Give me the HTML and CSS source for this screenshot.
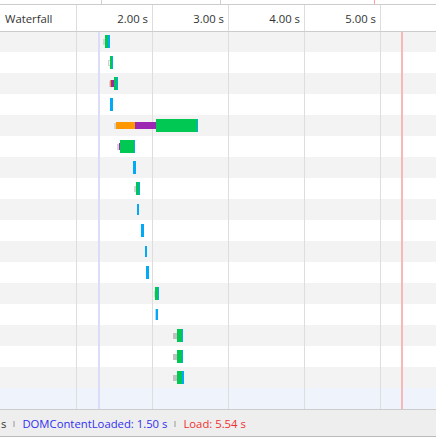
FILE: index.html
```html
<!DOCTYPE html>
<html>
<head>
<meta charset="utf-8">
<link rel="stylesheet" href="styles.css">
</head>
<body>
<div class="panel">
  <div class="overview"></div>
  <div class="header">
    <div class="hcell title">Waterfall</div>
    <div class="hcell tick">2.00 s</div>
    <div class="hcell tick">3.00 s</div>
    <div class="hcell tick">4.00 s</div>
    <div class="hcell tick">5.00 s</div>
    <div class="hcell"></div>
  </div>
  <div class="rows">
    <div class="row"><span class="off" style="width:103px"></span><span class="seg wait" style="width:2px"></span><span class="seg recv" style="width:3px"></span><span class="seg dl" style="width:1.5px"></span></div>
    <div class="row"><span class="off" style="width:108px"></span><span class="seg wait hollow" style="width:1.7px"></span><span class="seg recv" style="width:2px"></span><span class="seg dl" style="width:1.3px"></span></div>
    <div class="row"><span class="off" style="width:109px"></span><span class="seg wait" style="width:1px"></span><span class="seg dns" style="width:1.3px"></span><span class="seg ssl" style="width:2.7px"></span><span class="seg recv" style="width:2.7px"></span><span class="seg dl" style="width:1.3px"></span></div>
    <div class="row"><span class="off" style="width:110px"></span><span class="seg dl" style="width:3px"></span></div>
    <div class="row"><span class="off" style="width:114px"></span><span class="seg wait" style="width:2px"></span><span class="seg dns" style="width:19px"></span><span class="seg ssl" style="width:21px"></span><span class="seg recv" style="width:41px"></span><span class="seg dl" style="width:1px"></span></div>
    <div class="row"><span class="off" style="width:117px"></span><span class="seg wait" style="width:1.7px"></span><span class="seg ssl" style="width:1.3px"></span><span class="seg recv" style="width:13.7px"></span><span class="seg dl" style="width:1px"></span></div>
    <div class="row"><span class="off" style="width:133px"></span><span class="seg dl" style="width:3px"></span></div>
    <div class="row"><span class="off" style="width:134px"></span><span class="seg wait" style="width:2px"></span><span class="seg recv" style="width:3px"></span><span class="seg dl" style="width:1px"></span></div>
    <div class="row"><span class="off" style="width:137px"></span><span class="seg dl thin" style="width:2px"></span></div>
    <div class="row"><span class="off" style="width:141px"></span><span class="seg dl" style="width:3px"></span></div>
    <div class="row"><span class="off" style="width:145px"></span><span class="seg dl thin" style="width:2px"></span></div>
    <div class="row"><span class="off" style="width:146px"></span><span class="seg dl" style="width:3px"></span></div>
    <div class="row"><span class="off" style="width:154px"></span><span class="seg wait" style="width:1px"></span><span class="seg recv" style="width:3px"></span><span class="seg dl" style="width:1px"></span></div>
    <div class="row"><span class="off" style="width:155px"></span><span class="seg pale thin" style="width:1px"></span><span class="seg dl thin" style="width:2px"></span></div>
    <div class="row"><span class="off" style="width:173px"></span><span class="seg wait dark" style="width:4px"></span><span class="seg recv" style="width:5px"></span><span class="seg dl" style="width:1px"></span></div>
    <div class="row"><span class="off" style="width:173px"></span><span class="seg wait dark" style="width:4px"></span><span class="seg recv" style="width:5px"></span><span class="seg dl" style="width:1px"></span></div>
    <div class="row"><span class="off" style="width:173px"></span><span class="seg wait dark" style="width:4px"></span><span class="seg recv" style="width:5px"></span><span class="seg dl" style="width:2px"></span></div>
    <div class="row filler"></div>
  </div>
  <div class="status">
    <span class="stat">s</span>
    <span class="sep"></span>
    <span class="stat dcl">DOMContentLoaded: 1.50 s</span>
    <span class="sep"></span>
    <span class="stat load">Load: 5.54 s</span>
  </div>
</div>
</body>
</html>
```
FILE: styles.css
```css
html, body {
  margin: 0;
  padding: 0;
  background: #ffffff;
}
body {
  width: 436px;
  height: 440px;
  overflow: hidden;
  font-family: "Open Sans", "Noto Sans", sans-serif;
  font-size: 11.3px;
  color: #333333;
}
.panel {
  display: flex;
  flex-direction: column;
  width: 436px;
}
.overview {
  height: 4px;
  border-bottom: 1px solid #cccccc;
  background:
    linear-gradient(to right,
      transparent 101px, #d0d0d0 101px 102px,
      transparent 102px 220px, #d0d0d0 220px 221px,
      transparent 221px 374px, #f6a0a0 374px 375px,
      transparent 375px);
}
.header {
  position: relative;
  z-index: 1;
  display: grid;
  grid-template-columns: 76px 76px 76px 76px 76px 1fr;
  height: 26px;
  border-bottom: 1px solid #cccccc;
  background-color: #ffffff;
  background-image:
    linear-gradient(to right,
      transparent 76px, #dddddd 76px 77px,
      transparent 77px 152px, #dddddd 152px 153px,
      transparent 153px 228px, #dddddd 228px 229px,
      transparent 229px 304px, #dddddd 304px 305px,
      transparent 305px 380px, #dddddd 380px 381px,
      transparent 381px);
}
.hcell {
  display: flex;
  align-items: center;
  white-space: nowrap;
  overflow: hidden;
}
.title {
  padding-left: 5px;
}
.tick {
  justify-content: flex-end;
  padding-right: 4px;
}
.rows {
  display: flex;
  flex-direction: column;
  margin-top: -1px;
  background-color: #eef3fc;
  background-image:
    linear-gradient(to right,
      transparent 76px, #dddddd 76px 77px,
      transparent 77px 98px, #dcdcf8 98px 100px,
      transparent 100px 152px, #dddddd 152px 153px,
      transparent 153px 228px, #dddddd 228px 229px,
      transparent 229px 304px, #dddddd 304px 305px,
      transparent 305px 380px, #dddddd 380px 381px,
      transparent 381px 401px, #f7b8b8 401px 403px,
      transparent 403px),
    repeating-linear-gradient(to bottom, #f3f3f3 0 21px, #ffffff 21px 42px);
  background-size: 100% 100%, 100% 357px;
  background-repeat: no-repeat;
}
.row {
  display: flex;
  align-items: center;
  height: 21px;
}
.off {
  flex: none;
  height: 1px;
}
.seg {
  flex: none;
  height: 13px;
}
.wait {
  height: 6px;
  background: #d4d4d4;
}
.wait.dark {
  background: #c2c2c2;
}
.hollow {
  background: transparent;
  box-shadow: inset 1px 0 0 #cfcfcf, inset 0 1px 0 #cfcfcf, inset 0 -1px 0 #cfcfcf;
}
.dns {
  height: 7px;
  background: #ff9800;
}
.ssl {
  height: 7px;
  background: #9c27b0;
}
.recv {
  background: #00c853;
}
.dl {
  background: #03a9f4;
}
.thin {
  height: 11px;
}
.pale {
  background: #a6dcf7;
}
.filler {
  background: transparent;
}
.status {
  display: flex;
  align-items: center;
  gap: 7px;
  height: 26px;
  border-top: 1px solid #cccccc;
  border-bottom: 1px solid #bbbbbb;
  background: #eeeeee;
  padding-left: 1px;
  white-space: nowrap;
  color: #333333;
}
.sep {
  width: 2px;
  height: 6px;
  margin-top: 1px;
  background: #c4c4c4;
}
.dcl {
  color: #3030f0;
}
.load {
  color: #ee3030;
}
```
